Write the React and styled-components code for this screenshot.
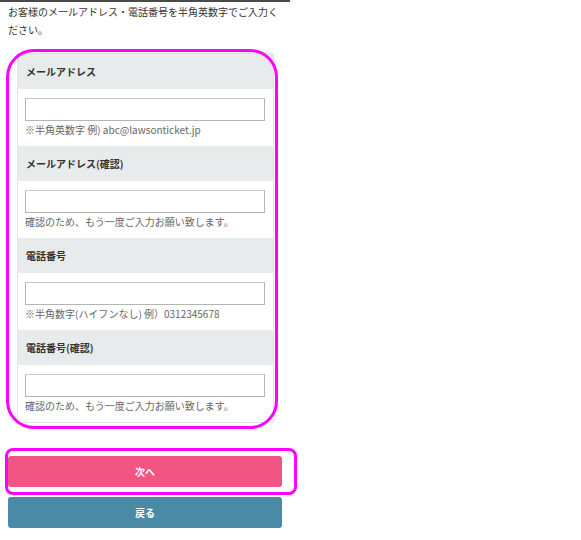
import React from 'react';
import styled, {createGlobalStyle} from "styled-components"

const Global = createGlobalStyle`
  body {
    margin: 0;
    background: #ffffff;
    font-family: "Noto Sans CJK JP", "Noto Sans", sans-serif;
    color: #333333;
  }
`
const Column = styled.div`
  width: 274px;
  padding: 0 8px;
  border-top: 2px solid #4a4a4a;
`
const Intro = styled.p`
  margin: 0;
  padding-top: 1px;
  font-size: 10px;
  line-height: 18px;
  color: #333;
`
const FormWrap = styled.div`
  position: relative;
  margin: 14px 8px 0 9px;
`
const FormBox = styled.div`
  border: 1px solid #e2e4e4;
`
const Header = styled.div`
  height: 35px;
  display: flex;
  align-items: center;
  padding-left: 8px;
  background: #e7ebeb;
  font-size: 10px;
  font-weight: bold;
  color: #333;
`
const Body = styled.div`
  height: 57px;
  padding: 9px 8px 0 7px;
  box-sizing: border-box;
  background: #fff;
`
const Input = styled.input`
  display: block;
  width: 100%;
  height: 23px;
  box-sizing: border-box;
  margin: 0;
  border: 1px solid #b4b4b4;
  border-top-color: #c8c8c8;
  background: #fff;
`
const Hint = styled.div`
  margin-top: 2px;
  font-size: 10px;
  line-height: 14px;
  color: #666;
  white-space: nowrap;
`
const Highlight = styled.div`
  position: absolute;
  top: ${p => p.$t}px;
  left: ${p => p.$l}px;
  right: ${p => p.$r}px;
  bottom: ${p => p.$b}px;
  border: 3px solid #ff00ff;
  border-radius: ${p => p.$radius}px;
  pointer-events: none;
`
const Buttons = styled.div`
  display: flex;
  flex-direction: column;
  gap: 10px;
  margin-top: 33px;
`
const Button = styled.button`
  display: flex;
  align-items: center;
  justify-content: center;
  width: 100%;
  height: 31px;
  border: none;
  border-radius: 3px;
  background: ${p => p.$bg};
  color: #fff;
  font-family: inherit;
  font-size: 10px;
  font-weight: bold;
`
const NextWrap = styled.div`
  position: relative;
`

const fields = [
    {label: "メールアドレス", hint: "※半角英数字 例) abc@lawsonticket.jp"},
    {label: "メールアドレス(確認)", hint: "確認のため、もう一度ご入力お願い致します。"},
    {label: "電話番号", hint: "※半角数字(ハイフンなし) 例）0312345678"},
    {label: "電話番号(確認)", hint: "確認のため、もう一度ご入力お願い致します。"},
]

const App = () => {
    return (
        <>
            <Global/>
            <Column>
                <Intro>お客様のメールアドレス・電話番号を半角英数字でご入力ください。</Intro>
                <FormWrap>
                    <FormBox>
                        {fields.map((f) => (
                            <div key={f.label}>
                                <Header>{f.label}</Header>
                                <Body>
                                    <Input type="text"/>
                                    <Hint>{f.hint}</Hint>
                                </Body>
                            </div>
                        ))}
                    </FormBox>
                    <Highlight $t={-4} $l={-11} $r={-4} $b={-6} $radius={28}/>
                </FormWrap>
                <Buttons>
                    <NextWrap>
                        <Button $bg="#f25584">次へ</Button>
                        <Highlight $t={-8} $l={-3} $r={-15} $b={-8} $radius={8}/>
                    </NextWrap>
                    <Button $bg="#4a8aa7">戻る</Button>
                </Buttons>
            </Column>
        </>
    );
};

export default App;
